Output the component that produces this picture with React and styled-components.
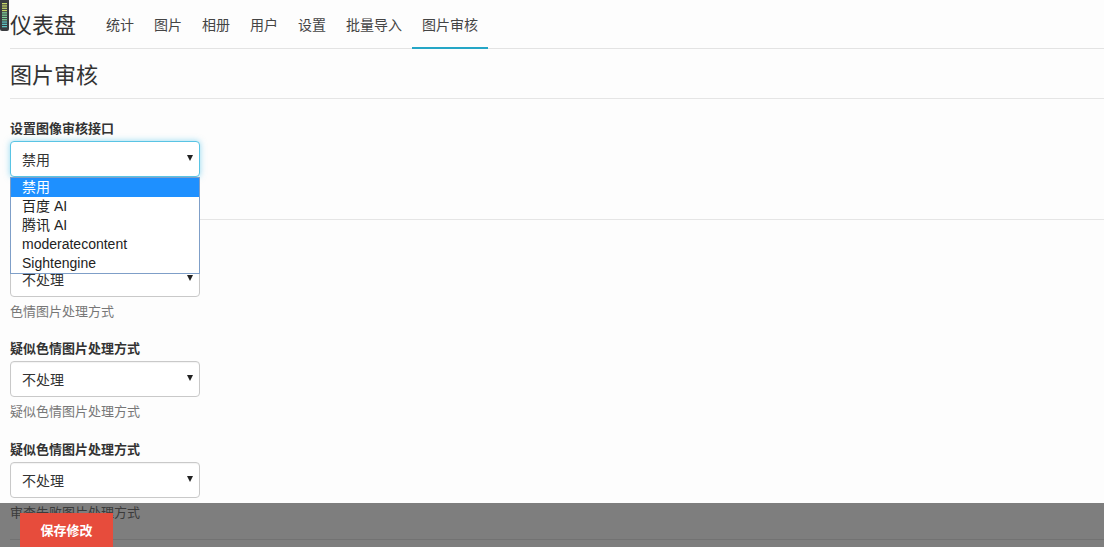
import React from "react";
import styled, { createGlobalStyle } from "styled-components";

const Global = createGlobalStyle`
  html, body { margin: 0; padding: 0; background: #fdfdfd; }
  body {
    font-family: "Liberation Sans", "Noto Sans CJK SC", sans-serif;
    font-size: 14px;
    color: #333;
  }
  * { box-sizing: border-box; }
`;

const Page = styled.div`
  padding-left: 10px;
  position: relative;
`;

const Meter = styled.svg`
  position: absolute;
  left: 0;
  top: 0;
`;

const Nav = styled.nav`
  display: flex;
  align-items: stretch;
  height: 49px;
  border-bottom: 1px solid #e3e3e3;
`;

const Brand = styled.div`
  font-size: 22px;
  line-height: 46px;
  color: #333;
  margin-right: 20px;
  font-family: "Noto Sans CJK SC", sans-serif;
`;

const NavLink = styled.a`
  padding: 0 10px;
  font-size: 14px;
  line-height: 48px;
  color: #444;
  text-decoration: none;
  font-family: "Noto Sans CJK SC", sans-serif;
  border-bottom: 2px solid ${(p) => (p.$active ? "#25a6c6" : "transparent")};
  height: 49px;
  margin-bottom: -1px;
`;

const Title = styled.h1`
  margin: 0;
  font-weight: normal;
  font-size: 22px;
  line-height: 24px;
  padding: 12px 0 13px;
  border-bottom: 1px solid #e5e5e5;
  font-family: "Noto Sans CJK SC", sans-serif;
  color: #333;
`;

const Form = styled.div`
  padding-top: 19px;
`;

const Group = styled.div`
  position: relative;
  margin-bottom: ${(p) => p.$mb ?? 15}px;
`;

const Label = styled.div`
  font-weight: bold;
  font-size: 13px;
  line-height: 20px;
  margin-bottom: 3px;
  font-family: "Noto Sans CJK SC", sans-serif;
  color: #333;
`;

const Select = styled.div`
  width: 190px;
  height: 36px;
  border: 1px solid ${(p) => (p.$focus ? "#59c4e4" : "#c9c9c9")};
  border-radius: 4px;
  background: #fff;
  display: flex;
  align-items: center;
  justify-content: space-between;
  padding: 0 6px 0 11px;
  font-size: 14px;
  font-family: "Noto Sans CJK SC", sans-serif;
  color: #333;
  box-shadow: ${(p) =>
    p.$focus ? "0 0 6px rgba(60, 185, 230, 0.55)" : "inset 0 1px 1px rgba(0,0,0,0.05)"};
`;

const Arrow = styled.span`
  width: 0;
  height: 0;
  border-left: 3px solid transparent;
  border-right: 3px solid transparent;
  border-top: 6px solid #222;
  margin-top: -2px;
`;

const Help = styled.div`
  margin-top: 5px;
  font-size: 13px;
  line-height: 18px;
  color: #777;
  font-family: "Noto Sans CJK SC", sans-serif;
`;

const Rule = styled.hr`
  border: 0;
  border-top: 1px solid #e5e5e5;
  margin: ${(p) => p.$m || "0"};
`;

const Options = styled.ul`
  position: absolute;
  left: 0;
  top: 59px;
  width: 190px;
  margin: 0;
  padding: 0;
  list-style: none;
  background: #fff;
  border: 1px solid #7f9fc8;
  z-index: 5;
`;

const Option = styled.li`
  height: 19px;
  line-height: 19px;
  padding-left: 11px;
  font-size: 14px;
  font-family: "Liberation Sans", "Noto Sans CJK SC", sans-serif;
  background: ${(p) => (p.$selected ? "#1e90ff" : "#fff")};
  color: ${(p) => (p.$selected ? "#fff" : "#222")};
`;

const Footer = styled.div`
  position: fixed;
  left: 0;
  right: 0;
  bottom: 0;
  height: 44px;
  background: rgba(0, 0, 0, 0.5);
  padding: 10px 0 0 20px;
  z-index: 10;
`;

const SaveButton = styled.button`
  width: 93px;
  height: 40px;
  border: 0;
  background: #e74c3c;
  color: #fff;
  font-weight: bold;
  font-size: 13px;
  font-family: "Noto Sans CJK SC", sans-serif;
  padding: 0 0 8px;
`;

const navItems = ["统计", "图片", "相册", "用户", "设置", "批量导入", "图片审核"];
const options = ["禁用", "百度 AI", "腾讯 AI", "moderatecontent", "Sightengine"];

export default function App() {
  return (
    <>
      <Global />
      <Meter width="10" height="31" viewBox="0 0 10 31">
        <rect x="0" y="-4" width="9" height="35" rx="2" fill="#3a3d40" />
        {Array.from({ length: 11 }).map((_, i) => (
          <rect
            key={i}
            x="2"
            y={3 + i * 2.3}
            width="5"
            height="1.3"
            fill={i < 4 ? "#c6d86a" : i < 8 ? "#7fd39a" : "#5cc4c2"}
          />
        ))}
      </Meter>
      <Page>
        <Nav>
          <Brand>仪表盘</Brand>
          {navItems.map((n, i) => (
            <NavLink key={n} href="#" $active={i === navItems.length - 1}>
              {n}
            </NavLink>
          ))}
        </Nav>
        <Title>图片审核</Title>
        <Form>
          <Group $mb={15}>
            <Label>设置图像审核接口</Label>
            <Select $focus>
              <span>禁用</span>
              <Arrow />
            </Select>
            <Help>设置图像审核接口</Help>
            <Options>
              {options.map((o, i) => (
                <Option key={o} $selected={i === 0}>
                  {o}
                </Option>
              ))}
            </Options>
          </Group>
          <Rule $m="19px 0 18px" />
          <Group $mb={18}>
            <Label>色情图片处理方式</Label>
            <Select>
              <span>不处理</span>
              <Arrow />
            </Select>
            <Help>色情图片处理方式</Help>
          </Group>
          <Group $mb={19}>
            <Label>疑似色情图片处理方式</Label>
            <Select>
              <span>不处理</span>
              <Arrow />
            </Select>
            <Help>疑似色情图片处理方式</Help>
          </Group>
          <Group $mb={18}>
            <Label>疑似色情图片处理方式</Label>
            <Select>
              <span>不处理</span>
              <Arrow />
            </Select>
            <Help>审查失败图片处理方式</Help>
          </Group>
          <Rule $m="0 0 80px" />
        </Form>
      </Page>
      <Footer>
        <SaveButton>保存修改</SaveButton>
      </Footer>
    </>
  );
}
